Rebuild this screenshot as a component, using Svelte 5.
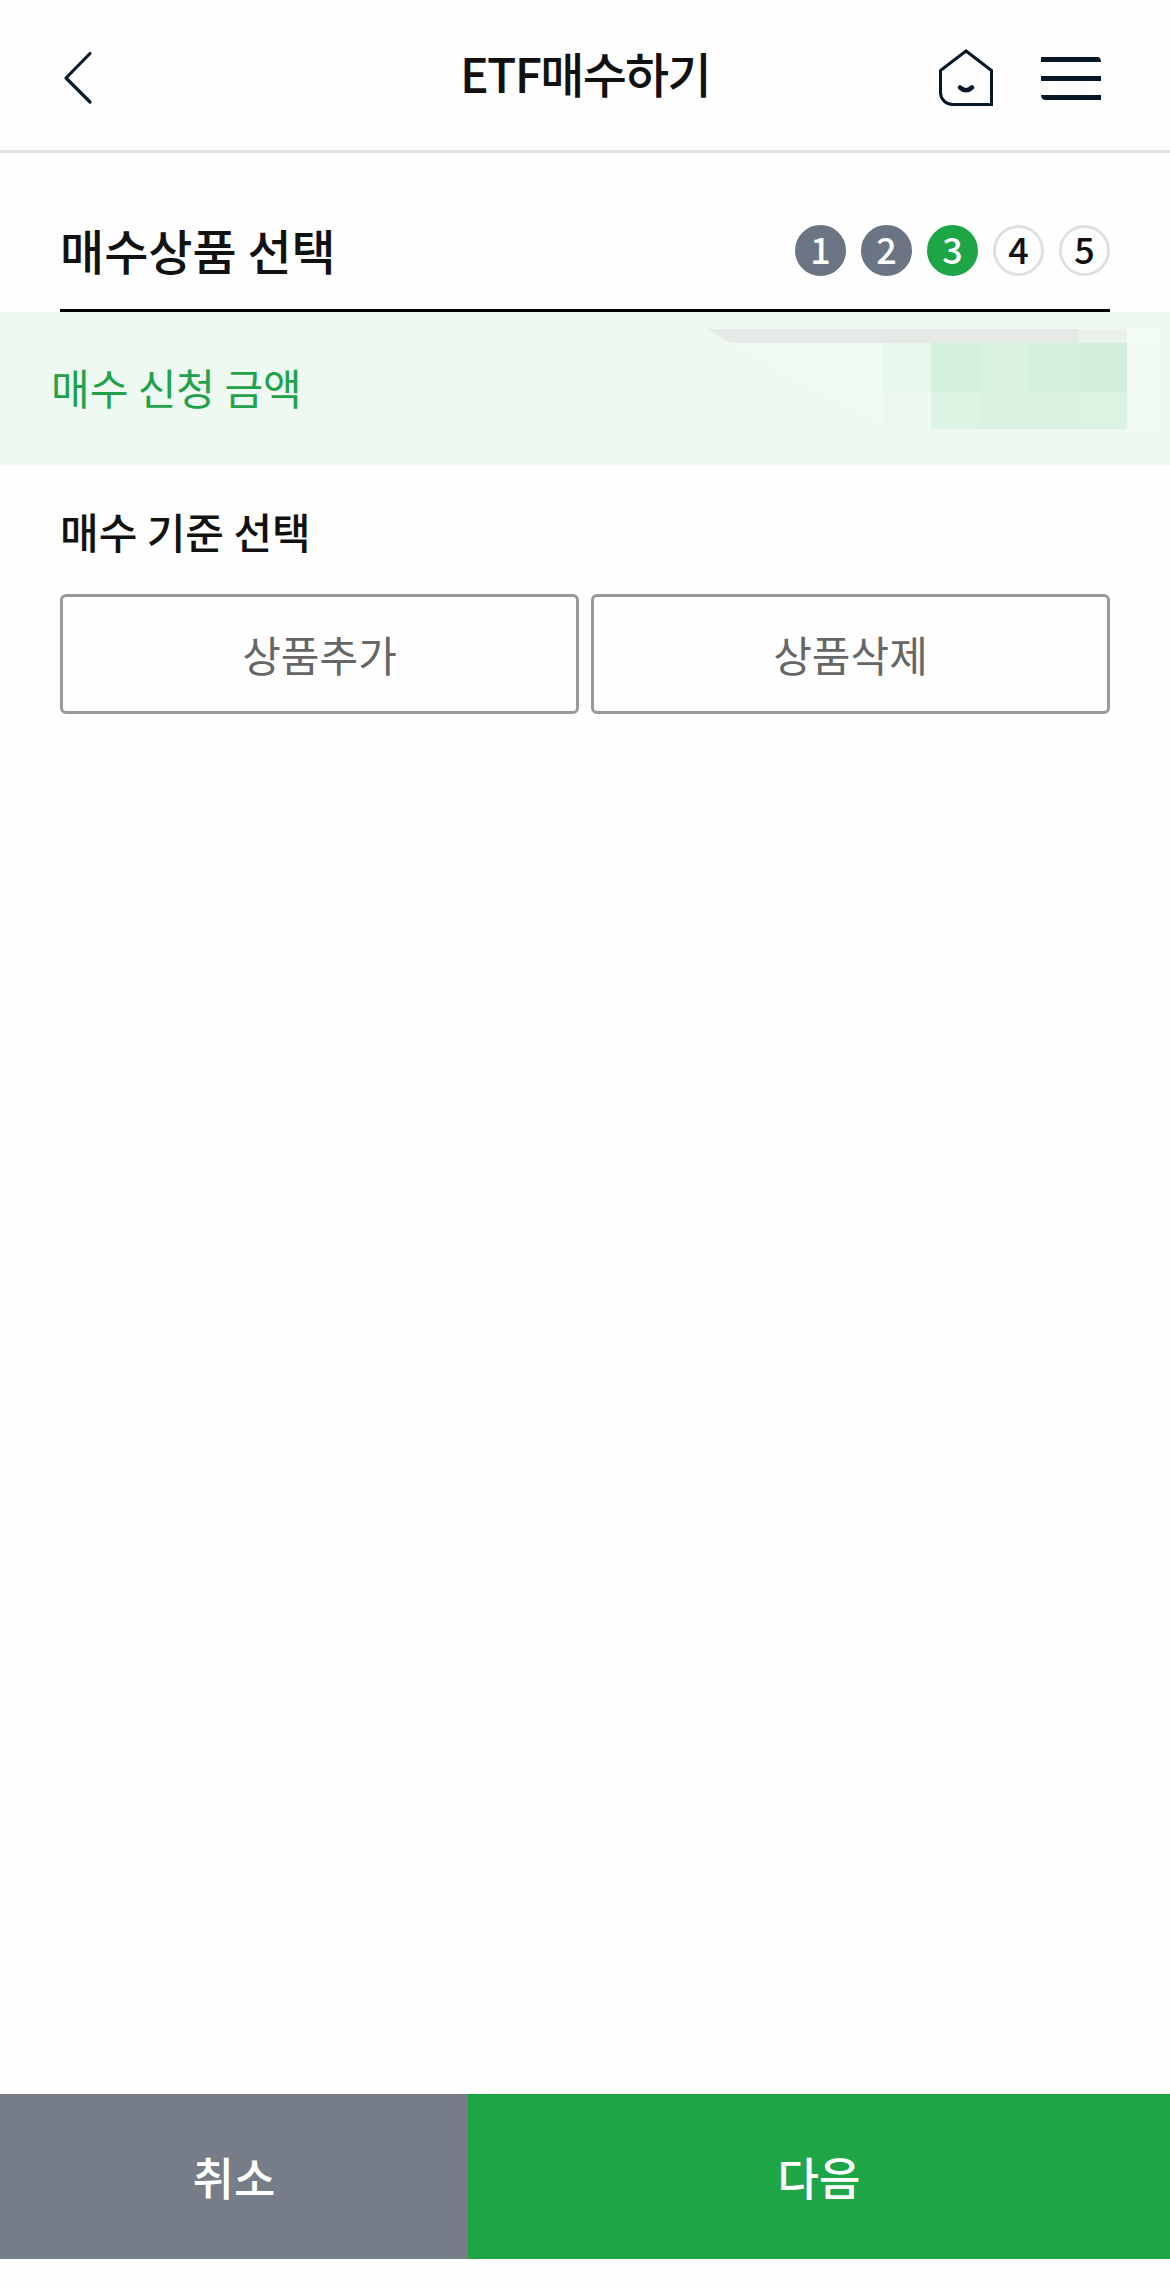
<script lang="ts">
    const steps = [1, 2, 3, 4, 5];
    let current = $state(3);
</script>

<div class="page">
    <header class="topbar">
        <button class="icon-button back" aria-label="이전">
            <svg width="30" height="54" viewBox="0 0 30 54">
                <path d="M27 2.500 3 27l24 24" fill="none" stroke="#0b1b2b" stroke-width="3.200" stroke-linecap="round" stroke-linejoin="round" />
            </svg>
        </button>
        <h1>ETF매수하기</h1>
        <div class="actions">
            <button class="icon-button" aria-label="홈">
                <svg width="54" height="58" viewBox="0 0 54 58">
                    <path d="M27 2 1.500 21.500V44A12 12 0 0 0 13.500 55.500H52.500V21.500Z" fill="none" stroke="#071727" stroke-width="3" />
                    <path d="M21 38.500q6 5.500 12 0" fill="none" stroke="#071727" stroke-width="4.500" stroke-linecap="round" />
                </svg>
            </button>
            <button class="icon-button" aria-label="메뉴">
                <svg width="60" height="43" viewBox="0 0 60 43" fill="#071727">
                    <path d="M0 0H56Q60 0 60 5H0Z" />
                    <path d="M0 19H60V24H0Z" />
                    <path d="M0 38H60V43H5Q0 43 0 38Z" />
                </svg>
            </button>
        </div>
    </header>

    <div class="section-title">
        <h2>매수상품 선택</h2>
        <ol class="steps">
            {#each steps as step}
                <li class:done={step < current} class:active={step === current}>{step}</li>
            {/each}
        </ol>
    </div>

    <div class="amount">
        <span>매수 신청 금액</span>
        <!-- masked amount -->
        <svg class="mask" width="490" height="153" viewBox="0 0 490 153">
            <path d="M50 31 207 114H202V31Z" fill="#f1fbf4" />
            <path d="M28 17H398V31H52Q42 27 28 17Z" fill="#e5eae7" />
            <path d="M398 17h49v14h-49z" fill="#e9f1ea" />
            <path d="M447 17h33v14h-33z" fill="#f4fef6" />
            <path d="M447 31h33v90h-33z" fill="#f0faf3" />
            <path d="M202 31h49v49h-49z" fill="#e8f8ed" />
            <path d="M202 80h36v32h-36z" fill="#ecf9f0" />
            <path d="M251 31h49v49h-49z" fill="#d3efdd" />
            <path d="M300 31h49v49h-49z" fill="#daf2e1" />
            <path d="M349 31h49v49h-49z" fill="#d6f0df" />
            <path d="M398 31h49v49h-49z" fill="#d2eedc" />
            <path d="M251 80h49v37h-49z" fill="#ddf4e4" />
            <path d="M300 80h98v37h-98z" fill="#dbf2e2" />
            <path d="M398 80h49v37h-49z" fill="#dcf3e3" />
        </svg>
    </div>

    <main>
        <h3>매수 기준 선택</h3>
        <div class="product-buttons">
            <button>상품추가</button>
            <button>상품삭제</button>
        </div>
    </main>

    <footer>
        <button class="cancel">취소</button>
        <button class="next">다음</button>
    </footer>
</div>

<style>
    :global(body) {
        margin: 0;
        background: #fefefe;
    }

    .page {
        display: flex;
        flex-direction: column;
        box-sizing: border-box;
        width: 1170px;
        height: 2289px;
        padding-bottom: 30px;
        background: #fefefe;
        color: #111;
        font-family: 'Noto Sans CJK KR', 'Noto Sans', sans-serif;
    }

    h1,
    h2,
    h3 {
        margin: 0;
        font-weight: 500;
    }

    button {
        padding: 0;
        border: none;
        background: none;
        color: inherit;
        font: inherit;
    }

    svg {
        display: block;
    }

    .topbar {
        display: grid;
        grid-template-columns: 1fr auto 1fr;
        align-items: center;
        box-sizing: border-box;
        height: 153px;
        padding: 6px 69px 0 63px;
        border-bottom: 3px solid #e0e0e0;
    }

    .back {
        justify-self: start;
    }

    h1 {
        padding: 0 0 12px 6px;
        font-size: 48px;
        line-height: 60px;
        letter-spacing: -1.7px;
    }

    .actions {
        display: flex;
        align-items: center;
        justify-content: flex-end;
        gap: 48px;
    }

    .section-title {
        display: flex;
        align-items: center;
        justify-content: space-between;
        box-sizing: border-box;
        height: 159px;
        margin: 0 60px;
        padding-top: 59px;
        padding-bottom: 20px;
        border-bottom: 3px solid #000;
    }

    h2 {
        margin-bottom: 3px;
        font-size: 48px;
        line-height: 72px;
    }

    .steps {
        display: flex;
        gap: 15px;
        margin: 0;
        padding: 0;
        list-style: none;
    }

    .steps li {
        box-sizing: border-box;
        width: 51px;
        height: 51px;
        border: 3px solid #e0e0e0;
        border-radius: 50%;
        font-size: 36px;
        font-weight: 500;
        line-height: 41px;
        text-align: center;
    }

    .steps .done {
        border-color: #6b7482;
        background: #6b7482;
        color: #fff;
    }

    .steps .active {
        border-color: #1da546;
        background: #1da546;
        color: #fff;
    }

    .amount {
        display: flex;
        align-items: center;
        justify-content: space-between;
        height: 153px;
        padding-left: 51px;
        background: #eef9f2;
        color: #1fa24a;
        font-size: 42px;
    }

    .amount span {
        padding-bottom: 4px;
    }

    main {
        flex: 1;
        padding: 34px 60px 0;
    }

    h3 {
        font-size: 42px;
        line-height: 63px;
    }

    .product-buttons {
        display: flex;
        gap: 12px;
        margin-top: 32px;
    }

    .product-buttons button {
        flex: 1;
        box-sizing: border-box;
        height: 120px;
        padding-bottom: 2px;
        border: 3px solid #999;
        border-radius: 6px;
        color: #666;
        font-size: 42px;
    }

    footer {
        display: flex;
        height: 165px;
        color: #fff;
        font-size: 45px;
        font-weight: 500;
    }

    .cancel {
        width: 468px;
        background: #777d88;
    }

    .next {
        flex: 1;
        background: #1da546;
    }
</style>
